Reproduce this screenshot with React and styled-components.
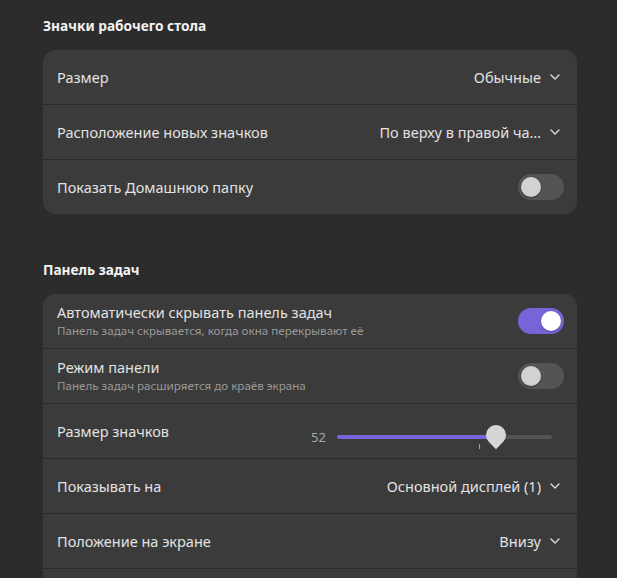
import React from "react";
import styled, { createGlobalStyle } from "styled-components";

const Global = createGlobalStyle`
  html, body { margin: 0; padding: 0; background: #2c2c2c; }
  body { font-family: "Noto Sans", "Open Sans", sans-serif; color: #e8e8e8; }
`;

const Page = styled.div`
  padding: 15px 40px 0 43px;
  display: flex;
  flex-direction: column;
  height: 578px;
  box-sizing: border-box;
  overflow: hidden;
`;

const Section = styled.section`
  display: flex;
  flex-direction: column;
  margin-bottom: ${(p) => p.$gap || 0}px;
`;

const Heading = styled.h2`
  margin: 0 0 14px 0;
  font-size: 13.7px;
  font-weight: 700;
  line-height: 21px;
  color: #f2f2f2;
`;

const Card = styled.div`
  background: #3b3b3b;
  border-radius: 12px;
  display: flex;
  flex-direction: column;
  overflow: hidden;
`;

const Row = styled.div`
  height: 54px;
  display: flex;
  align-items: center;
  justify-content: space-between;
  padding: 0 13px 0 14px;
  & + & { border-top: 1px solid #2a2a2a; }
`;

const Labels = styled.div`
  display: flex;
  flex-direction: column;
  gap: 1px;
`;

const Title = styled.div`
  font-size: 14.5px;
  color: #e2e2e2;
  line-height: 19px;
`;

const Sub = styled.div`
  font-size: 11.6px;
  color: #9a9a9a;
  line-height: 16px;
`;

const Dropdown = styled.div`
  display: flex;
  align-items: center;
  gap: 9px;
  padding-right: 4px;
  font-size: 14.5px;
  color: #e2e2e2;
`;

const Chevron = () => (
  <svg width="10" height="6" viewBox="0 0 10 6" fill="none">
    <path d="M1 1 L5 5 L9 1" stroke="#dcdcdc" strokeWidth="1.4" strokeLinecap="round" strokeLinejoin="round" />
  </svg>
);

const Track = styled.div`
  width: 46px;
  height: 26px;
  border-radius: 13px;
  background: ${(p) => (p.$on ? "#7764d8" : "#545454")};
  display: flex;
  align-items: center;
  justify-content: ${(p) => (p.$on ? "flex-end" : "flex-start")};
  padding: 0 3px;
  box-sizing: border-box;
`;

const Knob = styled.div`
  width: 20px;
  height: 20px;
  border-radius: 50%;
  background: ${(p) => (p.$on ? "#ffffff" : "#d2d2d2")};
  box-shadow: 0 1px 2px rgba(0,0,0,0.3);
`;

const Toggle = ({ on }) => (
  <Track $on={on}>
    <Knob $on={on} />
  </Track>
);

const SliderWrap = styled.div`
  display: flex;
  align-items: center;
  gap: 10px;
  padding-right: 12px;
  margin-top: 12px;
`;

const Value = styled.span`
  font-size: 13px;
  color: #a8a8a8;
  width: 16px;
`;

const Rail = styled.div`
  position: relative;
  width: 215px;
  height: 4px;
  border-radius: 2px;
  background: #545454;
`;

const Fill = styled.div`
  height: 100%;
  border-radius: 2px;
  background: #7764d8;
`;

const Thumb = styled.div`
  position: absolute;
  top: -10px;
  width: 20px;
  height: 20px;
  border-radius: 50% 50% 50% 0;
  background: #d6d6d6;
  transform: translateX(-50%) rotate(-45deg);
  transform-origin: center;
`;

const ThumbHolder = styled.div`
  position: absolute;
  top: 0;
  width: 0;
  height: 0;
`;

const Tick = styled.div`
  position: absolute;
  top: 9px;
  width: 1px;
  height: 5px;
  background: #a0a0a0;
`;

const Slider = ({ value, fill, tick }) => (
  <SliderWrap>
    <Value>{value}</Value>
    <Rail>
      <Fill style={{ width: `${fill}%` }} />
      <Tick style={{ left: `${tick}%` }} />
      <ThumbHolder style={{ left: `${fill}%` }}>
        <Thumb />
      </ThumbHolder>
    </Rail>
  </SliderWrap>
);

export default function App() {
  return (
    <>
      <Global />
      <Page>
        <Section $gap={45}>
          <Heading>Значки рабочего стола</Heading>
          <Card>
            <Row>
              <Title>Размер</Title>
              <Dropdown>Обычные <Chevron /></Dropdown>
            </Row>
            <Row>
              <Title>Расположение новых значков</Title>
              <Dropdown>По верху в правой ча… <Chevron /></Dropdown>
            </Row>
            <Row>
              <Title>Показать Домашнюю папку</Title>
              <Toggle on={false} />
            </Row>
          </Card>
        </Section>
        <Section>
          <Heading>Панель задач</Heading>
          <Card>
            <Row>
              <Labels>
                <Title>Автоматически скрывать панель задач</Title>
                <Sub>Панель задач скрывается, когда окна перекрывают её</Sub>
              </Labels>
              <Toggle on />
            </Row>
            <Row>
              <Labels>
                <Title>Режим панели</Title>
                <Sub>Панель задач расширяется до краёв экрана</Sub>
              </Labels>
              <Toggle on={false} />
            </Row>
            <Row>
              <Title>Размер значков</Title>
              <Slider value="52" fill={74} tick={66} />
            </Row>
            <Row>
              <Title>Показывать на</Title>
              <Dropdown>Основной дисплей (1) <Chevron /></Dropdown>
            </Row>
            <Row>
              <Title>Положение на экране</Title>
              <Dropdown>Внизу <Chevron /></Dropdown>
            </Row>
            <Row />
          </Card>
        </Section>
      </Page>
    </>
  );
}
